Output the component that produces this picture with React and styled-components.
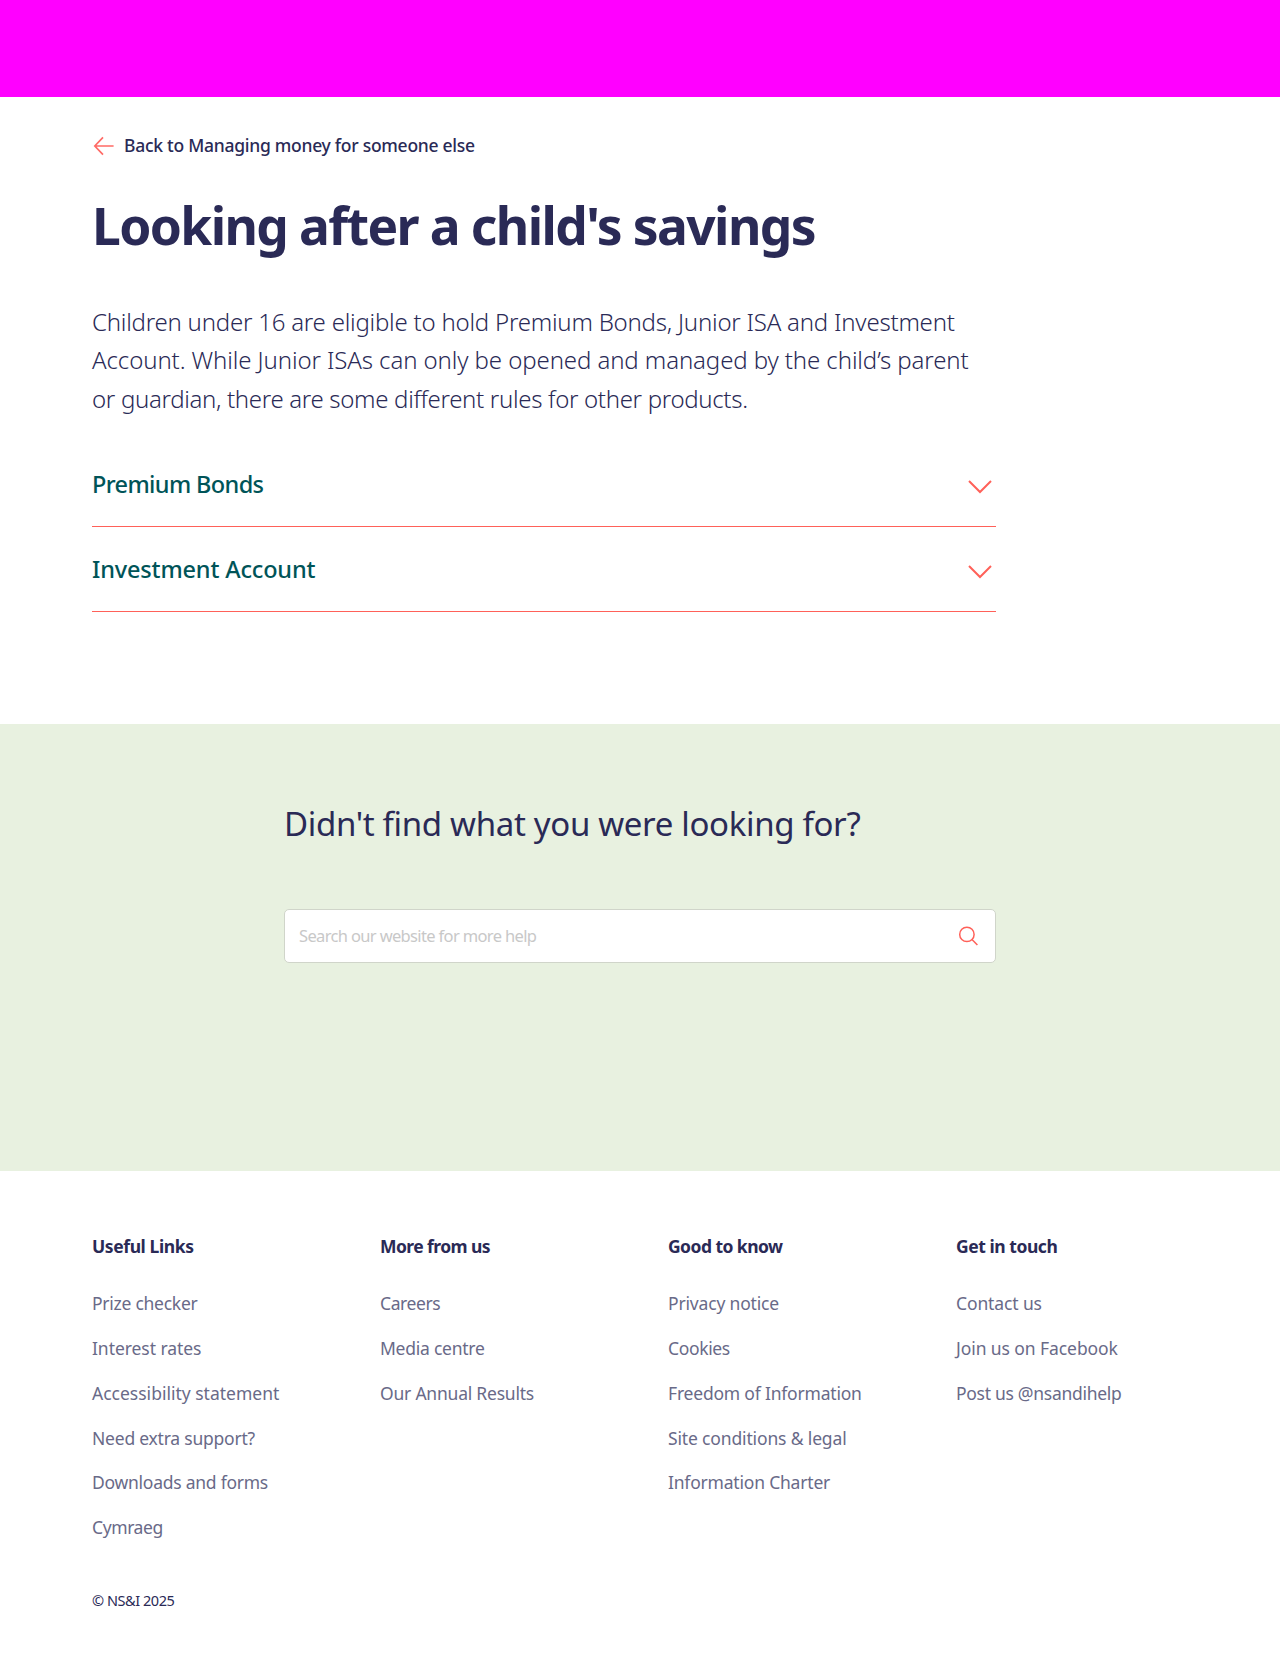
import React from 'react';
import styled, { createGlobalStyle } from 'styled-components';

const GlobalStyle = createGlobalStyle`
  *, *::before, *::after { box-sizing: border-box; }
  body { margin: 0; background: #fff; color: #2a2a56; font-family: 'Noto Sans', 'Open Sans', sans-serif; }
  h1, h2, h3, p, ul { margin: 0; padding: 0; }
`;

const Page = styled.div`
  display: flex;
  flex-direction: column;
  min-height: 1679px;
`;

const Banner = styled.div`
  height: 97px;
  background: #ff00ff;
`;

const Main = styled.main`
  height: 627px;
  padding: 36px 284px 0 92px;
`;

const BackLink = styled.a`
  display: flex;
  align-items: center;
  gap: 7px;
  height: 24px;
  font-size: 17.5px;
  font-weight: 500;
  line-height: 24px;
  letter-spacing: -0.27px;
  color: #2a2a56;
  text-decoration: none;
  white-space: nowrap;
`;

const BackArrow = styled.svg`
  width: 25px;
  height: 24px;
`;

const Title = styled.h1`
  margin-top: 38px;
  font-size: 51.5px;
  line-height: 60px;
  font-weight: 700;
  letter-spacing: -1.6px;
  white-space: nowrap;
`;

const Intro = styled.p`
  margin-top: 48px;
  font-size: 24px;
  line-height: 38.4px;
  font-weight: 300;
`;

const Line = styled.span`
  display: block;
  width: max-content;
  white-space: nowrap;
  letter-spacing: ${p => p.$tracking}px;
`;

const Accordion = styled.div`
  margin-top: 24px;
`;

const AccordionRow = styled.button`
  display: flex;
  justify-content: space-between;
  width: 100%;
  height: 85px;
  padding: 27px 4px 0 0;
  border: 0;
  border-bottom: 1px solid #ff6159;
  background: none;
  text-align: left;
  color: #005458;
  font-family: inherit;
`;

const AccordionLabel = styled.span`
  font-size: 23.5px;
  line-height: 30px;
  font-weight: 500;
  letter-spacing: ${p => p.$tracking}px;
`;

const Chevron = styled.svg`
  width: 24px;
  height: 14px;
  margin-top: 11px;
`;

const SearchBand = styled.section`
  height: 447px;
  padding: 78px 284px 0;
  background: #e8f1e0;
`;

const SearchTitle = styled.h2`
  width: max-content;
  font-size: 33px;
  line-height: 44px;
  font-weight: 400;
  letter-spacing: -0.33px;
`;

const SearchBox = styled.label`
  display: flex;
  align-items: center;
  width: 712px;
  height: 54px;
  margin-top: 63px;
  padding: 0 17px 0 14px;
  border: 1px solid #d0d5ca;
  border-radius: 5px;
  background: #fff;
`;

const SearchInput = styled.input`
  flex: 1;
  border: 0;
  outline: 0;
  padding: 0 0 2px;
  background: none;
  font-family: inherit;
  font-size: 16.5px;
  letter-spacing: -0.65px;
  color: #2a2a56;
  &::placeholder { color: #c8c8c8; opacity: 1; }
`;

const SearchIcon = styled.svg`
  width: 20px;
  height: 20px;
`;

const Footer = styled.footer`
  padding: 63px 36px 0 92px;
`;

const Columns = styled.div`
  display: grid;
  grid-template-columns: repeat(4, 288px);
  height: 323px;
`;

const ColumnTitle = styled.h3`
  width: max-content;
  font-size: 17.5px;
  line-height: 24px;
  font-weight: 700;
  letter-spacing: ${p => p.$tracking}px;
`;

const Links = styled.ul`
  margin-top: 22.8px;
  list-style: none;
`;

const FooterLink = styled.a`
  display: block;
  width: max-content;
  font-size: 17.5px;
  line-height: 44.9px;
  letter-spacing: ${p => p.$tracking}px;
  color: #696a88;
  text-decoration: none;
`;

const Copyright = styled.p`
  width: max-content;
  margin-top: 31px;
  font-size: 14.5px;
  line-height: 24px;
  letter-spacing: -0.45px;
`;

const intro = [
  ['Children under 16 are eligible to hold Premium Bonds, Junior ISA and Investment', -0.22],
  ['Account. While Junior ISAs can only be opened and managed by the child’s parent', -0.1],
  ['or guardian, there are some different rules for other products.', -0.32],
];

const products = [
  ['Premium Bonds', -0.62],
  ['Investment Account', -0.16],
];

const columns = [
  {
    title: 'Useful Links',
    tracking: -0.4,
    links: [
      ['Prize checker', -0.26],
      ['Interest rates', -0.06],
      ['Accessibility statement', 0],
      ['Need extra support?', -0.22],
      ['Downloads and forms', -0.25],
      ['Cymraeg', -0.4],
    ],
  },
  {
    title: 'More from us',
    tracking: -0.57,
    links: [
      ['Careers', -0.4],
      ['Media centre', -0.25],
      ['Our Annual Results', -0.22],
    ],
  },
  {
    title: 'Good to know',
    tracking: -0.55,
    links: [
      ['Privacy notice', -0.17],
      ['Cookies', -0.35],
      ['Freedom of Information', -0.2],
      ['Site conditions & legal', -0.15],
      ['Information Charter', -0.2],
    ],
  },
  {
    title: 'Get in touch',
    tracking: -0.45,
    links: [
      ['Contact us', -0.12],
      ['Join us on Facebook', -0.08],
      ['Post us @nsandihelp', -0.29],
    ],
  },
];

export default function App() {
  return (
    <Page>
      <GlobalStyle />
      <Banner />
      <Main>
        <BackLink href="#">
          <BackArrow viewBox="0 0 25 24" fill="none" stroke="#ff6b66" strokeWidth="1.7">
            <path d="M21.6 13H3M11 4.3 2.8 13l8.2 8.7" />
          </BackArrow>
          <span>Back to Managing money for someone else</span>
        </BackLink>
        <Title>Looking after a child's savings</Title>
        <Intro>
          {intro.map(([text, tracking]) => (
            <Line key={text} $tracking={tracking}>{text}</Line>
          ))}
        </Intro>
        <Accordion>
          {products.map(([name, tracking]) => (
            <AccordionRow key={name} type="button">
              <AccordionLabel $tracking={tracking}>{name}</AccordionLabel>
              <Chevron viewBox="0 0 24 14" fill="none" stroke="#ff6159" strokeWidth="2">
                <path d="M1 1l11 11L23 1" />
              </Chevron>
            </AccordionRow>
          ))}
        </Accordion>
      </Main>
      <SearchBand>
        <SearchTitle>Didn't find what you were looking for?</SearchTitle>
        <SearchBox>
          <SearchInput placeholder="Search our website for more help" />
          <SearchIcon viewBox="0 0 20 20" fill="none" stroke="#ff6159" strokeWidth="1.5">
            <circle cx="8.9" cy="8.4" r="7.2" />
            <path d="M14 13.5l5.4 5.6" />
          </SearchIcon>
        </SearchBox>
      </SearchBand>
      <Footer>
        <Columns>
          {columns.map(column => (
            <div key={column.title}>
              <ColumnTitle $tracking={column.tracking}>{column.title}</ColumnTitle>
              <Links>
                {column.links.map(([label, tracking]) => (
                  <li key={label}>
                    <FooterLink $tracking={tracking} href="#">{label}</FooterLink>
                  </li>
                ))}
              </Links>
            </div>
          ))}
        </Columns>
        <Copyright>© NS&I 2025</Copyright>
      </Footer>
    </Page>
  );
}
